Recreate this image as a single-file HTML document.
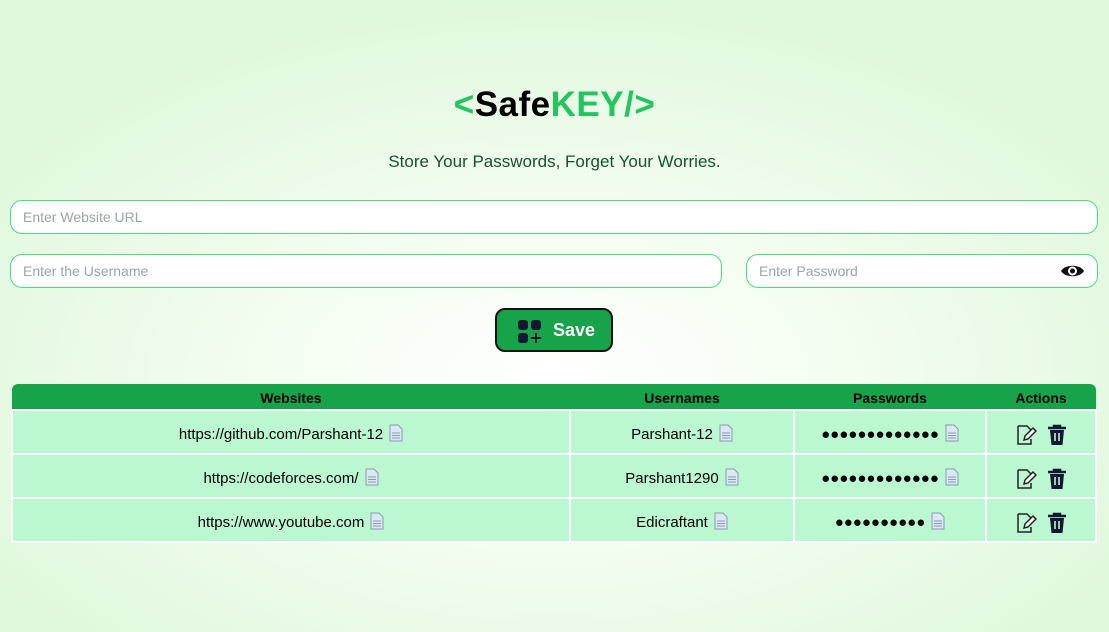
<!DOCTYPE html>
<html><head><meta charset="utf-8"><style>
*{box-sizing:border-box;margin:0;padding:0}
body{width:1109px;height:632px;overflow:hidden;font-family:"Liberation Sans",sans-serif;
background:radial-gradient(ellipse 60% 60% at 50% 60%,#ffffff 0%,#f3fdf0 45%,#e0f8dd 100%);position:relative}
.logo{position:absolute;top:85px;left:0;width:1109px;text-align:center;font-size:35px;font-weight:bold;letter-spacing:0.5px}
.g{color:#22c55e}
.tag{position:absolute;top:152px;width:1109px;text-align:center;font-size:17px;color:#14532d}
.inp{position:absolute;height:34px;border:1px solid #4ade80;border-radius:12px;background:#fff;font-size:14px;color:#9ca3af;padding-left:12px;line-height:32px}
.btn{position:absolute;left:495px;top:308px;width:118px;height:44px;background:#16a34a;border:2px solid #111;border-radius:10px;color:#fff;font-weight:bold;font-size:18px}
table{position:absolute;left:11px;top:384px;width:1086px;border-collapse:collapse;font-size:15px}
th{background:#16a34a;height:26px;font-size:14px;color:#000;padding-top:2px}
td{background:#bbf7d0;border:2px solid #fff;text-align:center;height:44px;padding-top:6px}
.doc{display:inline-block;vertical-align:-3px;margin-left:6px}
</style></head><body>
<div class="logo"><span class="g">&lt;</span>Safe<span class="g">KEY/&gt;</span></div>
<div class="tag">Store Your Passwords, Forget Your Worries.</div>
<div class="inp" style="left:10px;top:200px;width:1088px">Enter Website URL</div>
<div class="inp" style="left:10px;top:254px;width:712px">Enter the Username</div>
<div class="inp" style="left:746px;top:254px;width:352px">Enter Password
<svg style="position:absolute;right:12px;top:8px" width="25" height="16" viewBox="0 0 25 16"><path d="M1 8C5 1 20 1 24 8C20 15 5 15 1 8Z" fill="#111"/><circle cx="12.5" cy="8" r="4.5" fill="#fff"/><circle cx="12.5" cy="8" r="2.5" fill="#111"/></svg></div>
<div class="btn"><svg style="position:absolute;left:20px;top:9px" width="26" height="26" viewBox="0 0 26 26" fill="#111833"><rect x="1" y="1" width="10" height="10" rx="3"/><rect x="14" y="1" width="10" height="10" rx="3"/><rect x="1" y="14" width="10" height="10" rx="3"/><path d="M18 14h2v4h4v2h-4v4h-2v-4h-4v-2h4z"/></svg><span style="position:absolute;left:56px;top:10px">Save</span></div>
<table>
<tr><th style="width:558px;border-radius:6px 0 0 0">Websites</th><th style="width:224px">Usernames</th><th style="width:192px">Passwords</th><th style="border-radius:0 6px 0 0">Actions</th></tr>
<tr><td>https://github.com/Parshant-12<span class="doc">D</span></td><td>Parshant-12<span class="doc">D</span></td><td>●●●●●●●●●●●●●<span class="doc">D</span></td><td>A</td></tr>
<tr><td>https://codeforces.com/<span class="doc">D</span></td><td>Parshant1290<span class="doc">D</span></td><td>●●●●●●●●●●●●●<span class="doc">D</span></td><td>A</td></tr>
<tr><td>https://www.youtube.com<span class="doc">D</span></td><td>Edicraftant<span class="doc">D</span></td><td>●●●●●●●●●●<span class="doc">D</span></td><td>A</td></tr>
</table>
<script>
var doc='<svg width="14" height="18" viewBox="0 0 14 18"><path d="M1 1h8l4 4v12H1z" fill="#dbe7f3" stroke="#8a9bb0"/><path d="M3 9h8M3 11.5h8M3 14h8" stroke="#8a9bb0"/></svg>';
var act='<svg width="22" height="22" viewBox="0 0 22 22" style="vertical-align:middle;margin-right:10px"><path d="M3 2h9l4 4v3M16 15v5H3V2" fill="none" stroke="#222" stroke-width="1.5"/><path d="M9 16l1-4 8-8 3 3-8 8z" fill="#fff" stroke="#222" stroke-width="1.5"/></svg><svg width="20" height="22" viewBox="0 0 20 22" style="vertical-align:middle"><path d="M1 4h18M7 4V2h6v2" stroke="#111833" stroke-width="2.5" fill="none"/><path d="M3 6h14l-1.5 15h-11z" fill="#111833"/><path d="M8 9v8M12 9v8" stroke="#bbf7d0" stroke-width="1.6"/></svg>';
document.querySelectorAll('.doc').forEach(function(e){e.innerHTML=doc});
document.querySelectorAll('td').forEach(function(e){if(e.textContent==='A')e.innerHTML=act});
</script>
</body></html>
